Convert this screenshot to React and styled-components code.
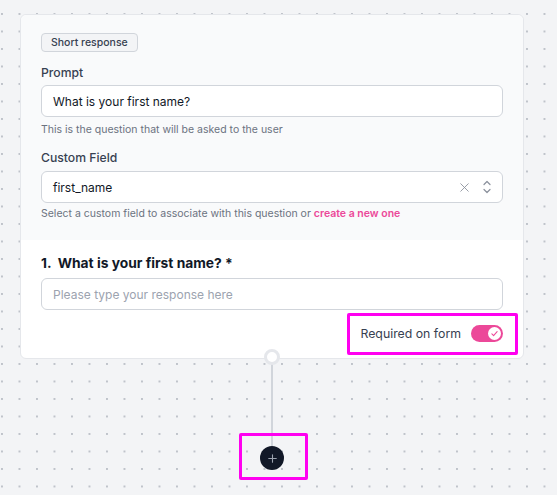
import React from "react";
import styled, { createGlobalStyle } from "styled-components";
import { X, Plus } from "lucide-react";

const GlobalStyle = createGlobalStyle`
  html, body {
    margin: 0;
    padding: 0;
  }
  body {
    font-family: Inter, "Noto Sans", sans-serif;
    color: #111827;
    -webkit-font-smoothing: antialiased;
  }
`;

const Canvas = styled.div`
  width: 557px;
  height: 495px;
  overflow: hidden;
  background-color: #f3f4f6;
  background-image: radial-gradient(circle at 1px 1px, #bfc3ca 0.9px, transparent 1.3px);
  background-size: 17.5px 17.5px;
  background-position: 1px 13px;
  padding: 14px 0 0 20px;
  box-sizing: border-box;
  display: flex;
  flex-direction: column;
`;

const Card = styled.div`
  position: relative;
  width: 504px;
  box-sizing: border-box;
  background: #ffffff;
  border: 1px solid #e5e7eb;
  border-radius: 6px;
`;

const Settings = styled.div`
  background: #f9fafb;
  border-radius: 6px 6px 0 0;
  padding: 18px 20px 20px;
  display: flex;
  flex-direction: column;
`;

const Badge = styled.span`
  align-self: flex-start;
  font-size: 10.5px;
  font-weight: 500;
  color: #374151;
  background: #f3f4f6;
  border: 1px solid #d1d5db;
  border-radius: 4px;
  padding: 2px 9px;
  line-height: 13px;
`;

const Label = styled.label`
  display: block;
  font-size: 12.2px;
  font-weight: 500;
  color: #374151;
  margin-top: ${(p) => p.$top}px;
  margin-bottom: ${(p) => p.$bottom}px;
  line-height: 14px;
`;

const Field = styled.div`
  height: 32px;
  box-sizing: border-box;
  border: 1px solid #d1d5db;
  border-radius: 6px;
  background: #ffffff;
  display: flex;
  align-items: center;
  padding: 0 11px 0 11px;
  font-size: 12px;
  color: ${(p) => (p.$placeholder ? "#9ca3af" : "#111827")};
  gap: 11px;
`;

const FieldText = styled.span`
  flex: 1;
`;

const IconGray = styled.span`
  display: flex;
  color: #8b919c;
`;

const Help = styled.p`
  margin: ${(p) => p.$top}px 0 0;
  font-size: 10.5px;
  line-height: 13px;
  color: #6b7280;
`;

const HelpLink = styled.a`
  color: #ec4899;
  font-weight: 600;
  text-decoration: none;
`;

const Preview = styled.div`
  padding: 15px 20px 16px;
  display: flex;
  flex-direction: column;
`;

const Question = styled.h3`
  margin: 0 0 7px;
  font-size: 13.8px;
  font-weight: 700;
  line-height: 16px;
  color: #111827;
  white-space: pre;
`;

const ToggleRow = styled.div`
  position: relative;
  align-self: flex-end;
  display: flex;
  align-items: center;
  gap: 10px;
  margin-top: 15px;
  font-size: 12.3px;
  line-height: 17px;
  color: #374151;
`;

const Highlight = styled.div`
  position: absolute;
  top: ${(p) => p.$t}px;
  right: ${(p) => p.$r}px;
  bottom: ${(p) => p.$b}px;
  left: ${(p) => p.$l}px;
  border: 3px solid #ff00f0;
  border-radius: 2px;
  pointer-events: none;
`;

const Switch = styled.span`
  width: 32px;
  height: 17px;
  border-radius: 9px;
  background: #ec4899;
  display: flex;
  align-items: center;
  justify-content: flex-end;
  padding: 0 2px;
  box-sizing: border-box;
`;

const Knob = styled.span`
  width: 13px;
  height: 13px;
  border-radius: 50%;
  background: #ffffff;
  display: flex;
  align-items: center;
  justify-content: center;
`;

const Port = styled.span`
  position: absolute;
  left: 50%;
  bottom: -7px;
  margin-left: -8px;
  width: 16px;
  height: 16px;
  box-sizing: border-box;
  border-radius: 50%;
  background: #ffffff;
  border: 3px solid #e5e7eb;
`;

const Flow = styled.div`
  width: 504px;
  display: flex;
  flex-direction: column;
  align-items: center;
`;

const Line = styled.div`
  width: 2px;
  height: 87px;
  background: #d1d5db;
`;

const AddWrap = styled.div`
  position: relative;
`;

const AddButton = styled.button`
  width: 24px;
  height: 24px;
  border-radius: 50%;
  border: none;
  padding: 0;
  background: #111827;
  color: #9ca3af;
  display: flex;
  align-items: center;
  justify-content: center;
`;

function UpDown() {
  return (
    <svg width="8" height="16" viewBox="0 0 8 16" fill="none">
      <path
        d="M1 5.5L4 2.5L7 5.5M1 10.5L4 13.5L7 10.5"
        stroke="currentColor"
        strokeWidth="1.2"
        strokeLinecap="round"
        strokeLinejoin="round"
      />
    </svg>
  );
}

export default function App() {
  return (
    <>
      <GlobalStyle />
      <Canvas>
        <Card>
          <Settings>
            <Badge>Short response</Badge>
            <Label $top={14} $bottom={5}>Prompt</Label>
            <Field>
              <FieldText>What is your first name?</FieldText>
            </Field>
            <Help $top={6}>This is the question that will be asked to the user</Help>
            <Label $top={15} $bottom={6}>Custom Field</Label>
            <Field>
              <FieldText>first_name</FieldText>
              <IconGray>
                <X size={15} strokeWidth={1.4} />
              </IconGray>
              <IconGray>
                <UpDown />
              </IconGray>
            </Field>
            <Help $top={4}>
              Select a custom field to associate with this question or{" "}
              <HelpLink href="#">create a new one</HelpLink>
            </Help>
          </Settings>
          <Preview>
            <Question>{"1.  What is your first name? *"}</Question>
            <Field $placeholder>
              <FieldText>Please type your response here</FieldText>
            </Field>
            <ToggleRow>
              <span>Required on form</span>
              <Switch>
                <Knob>
                  <svg width="9" height="9" viewBox="0 0 12 12" fill="none">
                    <path
                      d="M2.5 6.5l2.3 2.3L9.5 3.5"
                      stroke="#ec4899"
                      strokeWidth="1.4"
                      strokeLinecap="round"
                      strokeLinejoin="round"
                    />
                  </svg>
                </Knob>
              </Switch>
              <Highlight $t={-12} $r={-15} $b={-13} $l={-13} />
            </ToggleRow>
          </Preview>
          <Port />
        </Card>
        <Flow>
          <Line />
          <AddWrap>
            <AddButton>
              <Plus size={13} strokeWidth={2} />
            </AddButton>
            <Highlight $t={-13} $r={-24} $b={-10} $l={-21} />
          </AddWrap>
        </Flow>
      </Canvas>
    </>
  );
}
